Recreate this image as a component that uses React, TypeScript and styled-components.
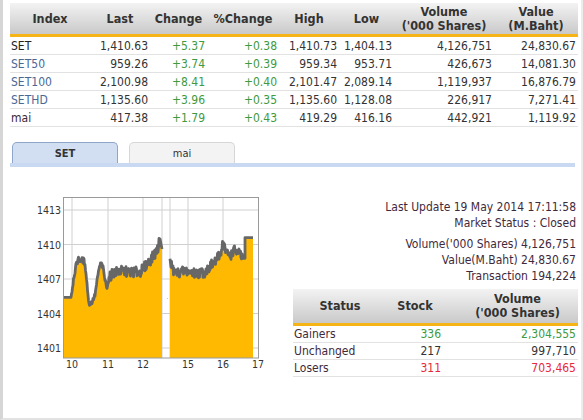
import React from "react";
import styled, { createGlobalStyle } from "styled-components";

const Global = createGlobalStyle`
  html, body { margin: 0; padding: 0; background: #fff; }
  body { font-family: "DejaVu Sans Condensed", "DejaVu Sans", Tahoma, sans-serif; font-size: 12px; color: #333; }
`;

const Frame = styled.div`
  box-sizing: border-box;
  width: 583px;
  height: 420px;
  border-left: 3px solid #d6d6d6;
  border-right: 2px solid #ececec;
  border-bottom: 2px solid #e2e2e2;
  padding: 3px 3px 0 7px;
  overflow: hidden;
`;

const cols = "80px 60px 57px 72px 60px 55px 100px 1fr";

const HeadRow = styled.div<{ $cols: string; $h?: number }>`
  display: grid;
  grid-template-columns: ${(p) => p.$cols};
  height: ${(p) => p.$h ?? 31}px;
  background: linear-gradient(#f3f3f3, #c9c9c9);
  border-bottom: 3px solid #f6b417;
`;

const HeadCell = styled.div<{ $pr?: number }>`
  display: flex;
  align-items: center;
  justify-content: center;
  text-align: center;
  font-weight: bold;
  font-size: 12.5px;
  line-height: 14px;
  color: #333;
  padding-right: ${(p) => p.$pr ?? 0}px;
`;

const Row = styled.div<{ $cols: string; $h: number }>`
  display: grid;
  grid-template-columns: ${(p) => p.$cols};
  height: ${(p) => p.$h}px;
  box-sizing: border-box;
  border-bottom: 1px solid #e2e2e2;
  align-items: center;
`;

const Cell = styled.div<{ $color?: string; $left?: boolean; $pr?: number }>`
  text-align: ${(p) => (p.$left ? "left" : "right")};
  padding: 0 ${(p) => p.$pr ?? 2}px 0 ${(p) => (p.$left ? 1 : 0)}px;
  color: ${(p) => p.$color ?? "#333"};
  font-size: 12px;
  white-space: nowrap;
`;

const Tabs = styled.div`
  display: flex;
  gap: 11px;
  margin-top: 15px;
  padding-left: 2px;
  border-bottom: 4px solid #c9d9f2;
  margin-right: 3px;
`;

const Tab = styled.div<{ $active?: boolean }>`
  width: 106px;
  height: 21px;
  box-sizing: border-box;
  display: flex;
  align-items: center;
  justify-content: center;
  border: 1px solid ${(p) => (p.$active ? "#8fa6c8" : "#d6d6d6")};
  border-bottom: none;
  border-radius: 5px 5px 0 0;
  background: ${(p) => (p.$active ? "#d2dff3" : "#f3f3f3")};
  font-weight: ${(p) => (p.$active ? "bold" : "normal")};
  font-size: 11px;
  color: #333;
`;

const Content = styled.div`
  display: flex;
`;

const ChartPane = styled.div`
  width: 250px;
  padding: 23px 0 0 20px;
`;

const InfoPane = styled.div`
  flex: 1;
  display: flex;
  flex-direction: column;
  align-items: flex-end;
  padding-top: 32px;
  padding-right: 2px;
`;

const InfoLine = styled.div<{ $gap?: number }>`
  line-height: 16px;
  margin-top: ${(p) => p.$gap ?? 0}px;
  color: #3f2a3c;
  font-size: 12px;
  white-space: nowrap;
`;

const StatusTable = styled.div`
  width: 285px;
  margin-top: 5px;
  margin-right: -2px;
`;

// chart geometry (svg origin = page 30,190)
const X0 = 30;
const Y = (v: number) => 20 + (1413 - v) * 11.5;
const BOTTOM = 168;

const rnd = (i: number) => {
  const s = Math.sin(i * 12.9898 + 78.233) * 43758.5453;
  return s - Math.floor(s);
};

type K = [number, number];
const interp = (ks: K[], x: number) => {
  for (let i = 0; i < ks.length - 1; i++) {
    const [x1, v1] = ks[i];
    const [x2, v2] = ks[i + 1];
    if (x >= x1 && x <= x2) return x2 === x1 ? v2 : v1 + ((v2 - v1) * (x - x1)) / (x2 - x1);
  }
  return ks[ks.length - 1][1];
};

const morningK: K[] = [
  [63, 1405.4], [71, 1405.4], [72, 1406], [74, 1407.3], [76, 1408.1], [78, 1408.7], [84, 1408.6],
  [86, 1407.6], [88, 1405.6], [89, 1404.8], [92, 1405.0], [95, 1405.6], [97, 1406.8], [99, 1407.9],
  [101, 1408.4], [103, 1408.0], [105, 1406.9], [107, 1406.3], [109, 1407.0], [112, 1407.5],
  [120, 1407.7], [130, 1407.6], [140, 1407.6], [145, 1408.1], [150, 1408.6], [155, 1409.2],
  [158, 1409.7], [160, 1410.5], [162, 1409.6],
];
const afternoonK: K[] = [
  [170, 1408.8], [172, 1408.0], [175, 1407.5], [185, 1407.7], [195, 1407.5], [205, 1407.6],
  [210, 1408.1], [215, 1408.5], [220, 1409.1], [223, 1410.2], [226, 1409.3], [230, 1409.0],
  [234, 1409.5], [238, 1409.3], [243, 1408.8],
];

const amp = (x: number) => {
  if (x < 72) return 0;
  if (x < 84) return 0.25;
  if (x < 110) return 0.18;
  if (x < 160) return 0.45;
  if (x < 170) return 0;
  if (x < 243) return 0.45;
  return 0;
};

const build = (ks: K[], x1: number, x2: number, extra: K[] = []) => {
  const pts: [number, number][] = [];
  for (let i = 0; x1 + i * 0.5 <= x2; i += 1) {
    const x = x1 + i * 0.5;
    const v = interp(ks, x) + (rnd(i + x1 * 7) - 0.5) * 2 * amp(x);
    pts.push([x - X0, Y(v)]);
  }
  extra.forEach(([x, v]) => pts.push([x - X0, Y(v)]));
  return pts;
};

const morning = build(morningK, 63, 162);
const afternoon = build(afternoonK, 170, 243, [[245, 1408.8], [245, 1410.6], [253, 1410.6]]);

const toLine = (p: [number, number][]) => p.map(([x, y]) => `${x.toFixed(1)},${y.toFixed(1)}`).join(" ");
const toArea = (p: [number, number][]) =>
  `${toLine(p)} ${p[p.length - 1][0]},${BOTTOM} ${p[0][0]},${BOTTOM}`;

const ChartSvg = styled.svg`
  display: block;
  font-family: "DejaVu Sans Condensed", "DejaVu Sans", Tahoma, sans-serif;
`;

const yTicks = [1413, 1410, 1407, 1404, 1401];
const xTicks: [number, string][] = [[72, "10"], [108, "11"], [143, "12"], [188, "15"], [223, "16"], [258, "17"]];

const Chart = () => (
  <ChartSvg width={240} height={185} viewBox="0 0 240 185">
    {yTicks.map((v) => (
      <line key={v} x1={33} x2={229} y1={Y(v)} y2={Y(v)} stroke="#d0d0d0" strokeWidth={1} />
    ))}
    {xTicks.slice(0, 5).map(([x]) => (
      <line key={x} x1={x - X0} x2={x - X0} y1={7} y2={BOTTOM} stroke="#d0d0d0" strokeWidth={1} />
    ))}
    <line x1={162 - X0} x2={162 - X0} y1={7} y2={BOTTOM} stroke="#d0d0d0" />
    <line x1={170 - X0} x2={170 - X0} y1={7} y2={BOTTOM} stroke="#d0d0d0" />
    <line x1={33} x2={229} y1={Y(1405.3)} y2={Y(1405.3)} stroke="#f2c46a" strokeWidth={1} strokeDasharray="1 12" />
    <polygon points={toArea(morning)} fill="#ffb900" />
    <polygon points={toArea(afternoon)} fill="#ffb900" />
    <polyline points={toLine(morning)} fill="none" stroke="#676767" strokeWidth={2.8} strokeLinejoin="round" />
    <polyline points={toLine(afternoon)} fill="none" stroke="#676767" strokeWidth={2.8} strokeLinejoin="round" />
    <rect x={33.5} y={7.5} width={195} height={160.5} fill="none" stroke="#9a9a9a" strokeWidth={1} />
    {yTicks.map((v) => (
      <text key={v} x={31} y={Y(v) + 4} textAnchor="end" fontSize={10.5} fill="#333">
        {v}
      </text>
    ))}
    {xTicks.map(([x, l]) => (
      <text key={l} x={x - X0} y={178} textAnchor="middle" fontSize={10.5} fill="#333">
        {l}
      </text>
    ))}
  </ChartSvg>
);

const green = "#3e9a3e";
const red = "#e8283c";
const blue = "#4a6896";

const indexRows = [
  { n: "SET", c: "#222", v: ["1,410.63", "+5.37", "+0.38", "1,410.73", "1,404.13", "4,126,751", "24,830.67"] },
  { n: "SET50", c: blue, v: ["959.26", "+3.74", "+0.39", "959.34", "953.71", "426,673", "14,081.30"] },
  { n: "SET100", c: blue, v: ["2,100.98", "+8.41", "+0.40", "2,101.47", "2,089.14", "1,119,937", "16,876.79"] },
  { n: "SETHD", c: blue, v: ["1,135.60", "+3.96", "+0.35", "1,135.60", "1,128.08", "226,917", "7,271.41"] },
  { n: "mai", c: "#3a2a3a", v: ["417.38", "+1.79", "+0.43", "419.29", "416.16", "442,921", "1,119.92"] },
];

const sCols = "94px 70px 1fr";
const statusRows = [
  { n: "Gainers", s: "336", v: "2,304,555", c: green },
  { n: "Unchanged", s: "217", v: "997,710", c: "#333" },
  { n: "Losers", s: "311", v: "703,465", c: red },
];

export default function App() {
  return (
    <>
      <Global />
      <Frame>
        <HeadRow $cols={cols}>
          <HeadCell>Index</HeadCell>
          <HeadCell>Last</HeadCell>
          <HeadCell>Change</HeadCell>
          <HeadCell>%Change</HeadCell>
          <HeadCell>High</HeadCell>
          <HeadCell>Low</HeadCell>
          <HeadCell>
            Volume
            <br />
            ('000 Shares)
          </HeadCell>
          <HeadCell>
            Value
            <br />
            (M.Baht)
          </HeadCell>
        </HeadRow>
        {indexRows.map((r) => (
          <Row key={r.n} $cols={cols} $h={18}>
            <Cell $left $color={r.c}>{r.n}</Cell>
            <Cell>{r.v[0]}</Cell>
            <Cell $color={green}>{r.v[1]}</Cell>
            <Cell $color={green}>{r.v[2]}</Cell>
            <Cell>{r.v[3]}</Cell>
            <Cell>{r.v[4]}</Cell>
            <Cell>{r.v[5]}</Cell>
            <Cell>{r.v[6]}</Cell>
          </Row>
        ))}
        <Tabs>
          <Tab $active>SET</Tab>
          <Tab>mai</Tab>
        </Tabs>
        <Content>
          <ChartPane>
            <Chart />
          </ChartPane>
          <InfoPane>
            <InfoLine>Last Update 19 May 2014 17:11:58</InfoLine>
            <InfoLine>Market Status : Closed</InfoLine>
            <InfoLine $gap={5}>Volume('000 Shares) 4,126,751</InfoLine>
            <InfoLine>Value(M.Baht) 24,830.67</InfoLine>
            <InfoLine>Transaction 194,224</InfoLine>
            <StatusTable>
              <HeadRow $cols={sCols} $h={34}>
                <HeadCell>Status</HeadCell>
                <HeadCell $pr={14}>Stock</HeadCell>
                <HeadCell>
                  Volume
                  <br />
                  ('000 Shares)
                </HeadCell>
              </HeadRow>
              {statusRows.map((r) => (
                <Row key={r.n} $cols={sCols} $h={17}>
                  <Cell $left $color="#3f2a3c">{r.n}</Cell>
                  <Cell $color={r.c} $pr={16}>{r.s}</Cell>
                  <Cell $color={r.c}>{r.v}</Cell>
                </Row>
              ))}
            </StatusTable>
          </InfoPane>
        </Content>
      </Frame>
    </>
  );
}
